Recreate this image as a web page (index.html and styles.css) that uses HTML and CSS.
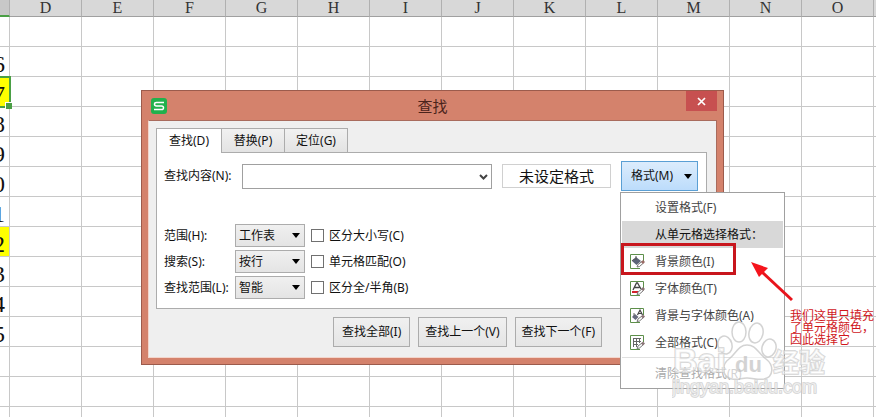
FILE: index.html
```html
<!doctype html>

<html lang="zh-CN">
<head>
  <meta charset="utf-8">
  <title>查找</title>
  <link rel="stylesheet" href="styles.css">
</head>

<body>

<div class="sheet-view">
<table class="sheet">
  <thead>
    <tr><th class="current"></th><th>D</th><th>E</th><th>F</th><th>G</th><th>H</th><th>I</th><th>J</th><th>K</th><th>L</th><th>M</th><th>N</th><th>O</th><th></th></tr>
  </thead>
  <tbody id="rows"></tbody>
</table>
</div>

<div class="dialog" role="dialog" aria-labelledby="title">
  <div class="titlebar">
    <svg class="logo" width="16" height="16" viewBox="0 0 16 16">
      <rect width="16" height="16" rx="3" fill="#22b14c"/>
      <path d="M13 4.500H5.500Q3.500 4.500 3.500 6.200T5.500 8h5Q12.500 8 12.500 9.800T10.500 11.500H3" fill="none" stroke="#fff" stroke-width="1.500"/>
    </svg>
    <span id="title" class="title">查找</span>
    <button class="close" aria-label="关闭">
      <svg width="9" height="9" viewBox="0 0 9 9"><path d="M1 1l7 7M8 1L1 8" stroke="#fff" stroke-width="1.700"/></svg>
    </button>
  </div>

  <div class="content">
    <div class="tabs" role="tablist">
      <button class="tab active" role="tab" aria-selected="true">查找(D)</button>
      <button class="tab" role="tab">替换(P)</button>
      <button class="tab" role="tab">定位(G)</button>
    </div>

    <div class="panel">
      <div class="find">
        <label class="find-label" for="what">查找内容(N):</label>
        <div class="combo">
          <input type="text" id="what">
          <svg width="9" height="6" viewBox="0 0 9 6"><path d="M1 1l3.500 3.500L8 1" fill="none" stroke="#444" stroke-width="2"/></svg>
        </div>
        <output class="preview">未设定格式</output>
        <div class="format">
          <button class="format-btn">格式(M)<span class="arrow"></span></button>

          <div class="menu">
            <button class="item">设置格式(F)</button>
            <div class="item heading">从单元格选择格式：</div>
            <button class="item">
              <svg width="17" height="17" viewBox="0 0 17 17">
                <path d="M11 15.500H1.500v-14h13V8" fill="#fff" stroke="#5d8f4a"/>
                <path d="M3 8l4-4 5 4-4.500 4z" fill="#5d6478"/><path d="M3 8q1-2 3-2M7 3v4" fill="none" stroke="#555"/>
                <path d="M8 14l1-2.500 4-3 1.500 1.500-4 3.500z" fill="#fff" stroke="#777"/><path d="M12 9l2-2 2 2-2 2z" fill="#9b6b66"/>
              </svg>
              背景颜色(I)
            </button>
            <button class="item">
              <svg width="17" height="17" viewBox="0 0 17 17">
                <path d="M11 15.500H1.500v-14h13V8" fill="#fff" stroke="#5d8f4a"/>
                <path d="M4 10l3.500-7h1L12 9M5.500 7.500h5" fill="none" stroke="#444" stroke-width="1.300"/>
                <path d="M3 12h6" stroke="#d3222b" stroke-width="2"/>
                <path d="M8 14.500l1-2.500 4-3 1.500 1.500-4 3.500z" fill="#fff" stroke="#777"/><path d="M12 9l2-2 2 2-2 2z" fill="#8a7476"/>
              </svg>
              字体颜色(T)
            </button>
            <button class="item">
              <svg width="17" height="17" viewBox="0 0 17 17">
                <path d="M11 15.500H1.500v-14h13V8" fill="#fff" stroke="#5d8f4a"/>
                <path d="M8.500 8L11 3l2.500 5M9.500 6.500h3" fill="none" stroke="#444" stroke-width="1.200"/>
                <path d="M3 10l3-3 3.500 3-3 3z" fill="#666a7c"/><path d="M5 6v3" stroke="#666"/>
                <path d="M8 14.500l1-2.500 4-3 1.500 1.500-4 3.500z" fill="#fff" stroke="#777"/><path d="M12 9.500l2-2 2 2-2 2z" fill="#8a7476"/>
              </svg>
              背景与字体颜色(A)
            </button>
            <button class="item">
              <svg width="17" height="17" viewBox="0 0 17 17">
                <path d="M11 15.500H1.500v-14h13V8" fill="#fff" stroke="#5d8f4a"/>
                <path d="M4.500 4v9M7.500 4v9M10.500 4v5M4 4.500h8M4 7.500h8M4 10.500h5" fill="none" stroke="#666"/>
                <path d="M8 14.500l1-2.500 4-3 1.500 1.500-4 3.500z" fill="#fff" stroke="#777"/><path d="M12 9.500l2-2 2 2-2 2z" fill="#8a7476"/>
              </svg>
              全部格式(C)
            </button>
            <hr>
            <button class="item" disabled>清除查找格式(R)</button>
          </div>
        </div>
      </div>

      <div class="options">
        <label for="scope">范围(H):</label>
        <div class="pick"><select id="scope"><option>工作表</option></select><span class="arrow"></span></div>
        <label class="check"><input type="checkbox">区分大小写(C)</label>

        <label for="order">搜索(S):</label>
        <div class="pick"><select id="order"><option>按行</option></select><span class="arrow"></span></div>
        <label class="check"><input type="checkbox">单元格匹配(O)</label>

        <label for="lookin">查找范围(L):</label>
        <div class="pick"><select id="lookin"><option>智能</option></select><span class="arrow"></span></div>
        <label class="check"><input type="checkbox">区分全/半角(B)</label>
      </div>
    </div>

    <div class="actions">
      <button>查找全部(I)</button>
      <button>查找上一个(V)</button>
      <button>查找下一个(F)</button>
    </div>
  </div>
</div>

<!-- notes drawn over the window -->
<div class="mark"></div>
<svg class="pointer" width="46" height="42" viewBox="0 0 46 42">
  <path d="M42 39L12 11" stroke="#e8141c" stroke-width="3"/>
  <path d="M1 1l17 6-9 9z" fill="#f5141c"/>
</svg>
<p class="note">我们这里只填充了单元格颜色，因此选择它</p>

<svg class="watermark" width="164" height="84" viewBox="0 0 164 84">
  <g fill="#fff" fill-opacity=".6" stroke="#c9c9c9" stroke-width="1.500">
    <ellipse cx="53" cy="29" rx="7" ry="9" transform="rotate(-15 53 29)"/>
    <ellipse cx="67" cy="16" rx="7" ry="10"/>
    <ellipse cx="84" cy="17" rx="7" ry="10" transform="rotate(12 84 17)"/>
    <ellipse cx="97" cy="32" rx="7" ry="9" transform="rotate(15 97 32)"/>
    <path d="M75 29c-9 0-11 9-18 14s-8 18 3 20c6 1 9-1 15-1s11 2 17 1c10-2 10-14 2-20S84 29 75 29z"/>
    <text class="brand" x="1" y="56">Bai</text>
    <text class="cn" x="101" y="56">经验</text>
    <text class="url" x="0" y="77">jingyan.baidu.com</text>
  </g>
  <text class="du" x="63" y="56">du</text>
</svg>

<script>
// last digits of column C, the rest of the column is scrolled off
var values = ["", "6", "7", "8", "9", "0", "1", "2", "3", "4", "5", "", "", ""];
var html = "";
for (var i = 0; i < values.length; i++) {
	var cls = "";
	if (values[i] == "7") cls = "filled selected";
	if (values[i] == "2") cls = "filled";
	html += '<tr><td class="' + cls + '">' + values[i] + "</td>";
	for (var j = 0; j < 13; j++) html += "<td></td>";
	html += "</tr>";
}
document.getElementById("rows").innerHTML = html;
</script>
</body>
</html>
```

FILE: styles.css
```css
* {box-sizing: border-box;}

body {
	margin: 0;
	height: 100vh;
	overflow: hidden;
	position: relative;
	background-color: #fff;
	color: #111;
	font: 12px/18px "Noto Sans", "Noto Sans CJK SC", sans-serif;
}
button, input, select {
	font: inherit;
	color: inherit;
	margin: 0;
	padding: 0;
}

/* sheet behind the window */
.sheet-view {
	height: 100%;
	overflow: hidden;
}
.sheet {
	table-layout: fixed;
	width: 1008px;
	margin-left: -62px;
	border-collapse: separate;
	border-spacing: 0;
}
.sheet th {
	height: 17px;
	padding: 0;
	background-color: #d8d8d8;
	border-right: 1px solid #b0b0b0;
	border-bottom: 1px solid #a0a0a0;
	color: #333;
	font: 16px/16px "Liberation Serif", serif;
}
.sheet th.current {
	background-color: #c8c8c8;
	border-bottom: 2px solid #4a9f45;
}
.sheet td {
	height: 30px;
	padding: 4px 4px 0 0;
	border-right: 1px solid #c8c8c8;
	border-bottom: 1px solid #c8c8c8;
	text-align: right;
	font: 24px/24px "Liberation Serif", serif;
}
.sheet td.filled {background-color: #ff0;}
.sheet td.selected {
	position: relative;
	outline: 2px solid #4a9f45;
	outline-offset: -1px;
}
.sheet td.selected::after {
	content: "";
	position: absolute;
	right: -3px;
	bottom: -3px;
	width: 6px;
	height: 6px;
	background-color: #4a9f45;
	border: 1px solid #fff;
	border-width: 1px 0 0 1px;
}

/* find window */
.dialog {
	position: absolute;
	z-index: 0;
	left: 141px;
	top: 90px;
	width: 583px;
	padding: 0 6px 6px;
	background-color: #d4826c;
	border: 1px solid #9c5b4c;
}
.titlebar {
	display: flex;
	align-items: center;
	height: 29px;
	padding-left: 3px;
}
.title {
	flex: 1;
	padding-left: 12px;
	text-align: center;
	font-size: 15px;
	color: #4a231b;
}
.close {
	align-self: flex-start;
	display: flex;
	align-items: center;
	justify-content: center;
	width: 31px;
	height: 20px;
	background-color: #c75050;
	border: 0;
}
.content {
	padding: 7px 9px 10px 7px;
	background-color: #efefef;
	border: 1px solid #a96b5d;
	border-left-color: #f3d5cb;
	border-bottom-color: #f3d5cb;
}

.tabs {
	display: flex;
	align-items: flex-end;
}
.tab {
	height: 24px;
	width: 63px;
	background: linear-gradient(#f1f1f1, #e3e3e3);
	border: 1px solid #acacac;
	border-left: 0;
	border-bottom: 0;
}
.tab.active {
	position: relative;
	width: 66px;
	height: 25px;
	margin-bottom: -1px;
	border-left: 1px solid #acacac;
	background: #fff;
}

.panel {
	padding: 8px 8px 9px 7px;
	background-color: #fff;
	border: 1px solid #acacac;
}
.find {
	display: flex;
	align-items: center;
	gap: 10px;
}
.find-label {
	width: 68px;
	white-space: nowrap;
}
.combo {
	flex: 1;
	position: relative;
}
.combo input {
	display: block;
	width: 100%;
	height: 25px;
	padding: 0 20px 0 4px;
	border: 1px solid #a0a0a0;
	background-color: #fff;
}
.combo svg {
	position: absolute;
	right: 4px;
	top: 10px;
}
.preview {
	width: 109px;
	height: 24px;
	border: 1px solid #d0d0d0;
	text-align: center;
	font-size: 15px;
	line-height: 22px;
}
.arrow {
	border: 4px solid transparent;
	border-top: 5px solid #000;
	border-bottom: 0;
}
.format {position: relative;}
.format-btn {
	display: flex;
	align-items: center;
	justify-content: space-between;
	width: 77px;
	height: 30px;
	padding: 0 5px 0 9px;
	background: linear-gradient(#dcecfc, #bcdcfb);
	border: 1px solid #5a9fd4;
}

.options {
	display: grid;
	grid-template-columns: 71px 70px 1fr;
	grid-auto-rows: 23px;
	row-gap: 3px;
	align-items: center;
	margin-top: 33px;
}
.options label {white-space: nowrap;}
.pick {position: relative;}
.pick select {
	display: block;
	appearance: none;
	width: 100%;
	height: 23px;
	padding-left: 3px;
	background: linear-gradient(#f0f0f0, #e4e4e4);
	border: 1px solid #acacac;
	border-radius: 0;
}
.pick .arrow {
	position: absolute;
	right: 5px;
	top: 9px;
	pointer-events: none;
}
.check {
	display: flex;
	align-items: center;
	gap: 5px;
	padding-left: 6px;
}
.check input {
	appearance: none;
	width: 13px;
	height: 13px;
	background-color: #fff;
	border: 1px solid #707070;
}

.actions {
	display: flex;
	justify-content: flex-end;
	gap: 8px;
	margin-top: 8px;
	padding-right: 105px;
}
.actions button {
	min-width: 77px;
	height: 30px;
	padding: 0 6px;
	background: linear-gradient(#f0f0f0, #e5e5e5);
	border: 1px solid #acacac;
}

/* format menu */
.menu {
	position: absolute;
	z-index: 1;
	left: -1px;
	top: 31px;
	width: 165px;
	padding: 1px;
	background-color: #fff;
	border: 1px solid #a0a0a0;
}
.item {
	display: flex;
	align-items: center;
	position: relative;
	width: 100%;
	height: 27px;
	padding-left: 33px;
	background: none;
	border: 0;
	color: #444;
	white-space: nowrap;
}
.item svg {
	position: absolute;
	left: 7px;
	top: 5px;
}
.item.heading {
	background-color: #d8d8d8;
	color: #111;
}
.item:disabled {color: #aaa;}
.menu hr {
	margin: 1px 0 2px;
	border: 0;
	border-top: 1px solid #e0e0e0;
}

/* notes */
.mark {
	position: absolute;
	left: 621px;
	top: 243px;
	width: 115px;
	height: 32px;
	border: 3px solid #c8161d;
}
.pointer {
	position: absolute;
	left: 750px;
	top: 261px;
}
.note {
	position: absolute;
	left: 790px;
	top: 309px;
	width: 86px;
	margin: 0;
	color: #d0161b;
	font: 12px/12px "Noto Sans CJK SC", sans-serif;
}
.watermark {
	position: absolute;
	left: 672px;
	top: 316px;
	opacity: .8;
	pointer-events: none;
}
.watermark text {
	font-family: "Liberation Sans", "Noto Sans CJK SC", sans-serif;
	font-weight: bold;
	paint-order: stroke;
}
.watermark .brand {font-size: 34px;}
.watermark .cn {font-size: 26px;}
.watermark .url {
	font-size: 18px;
	font-weight: normal;
}
.watermark .du {
	font-size: 22px;
	fill: #c9c9c9;
}
```
